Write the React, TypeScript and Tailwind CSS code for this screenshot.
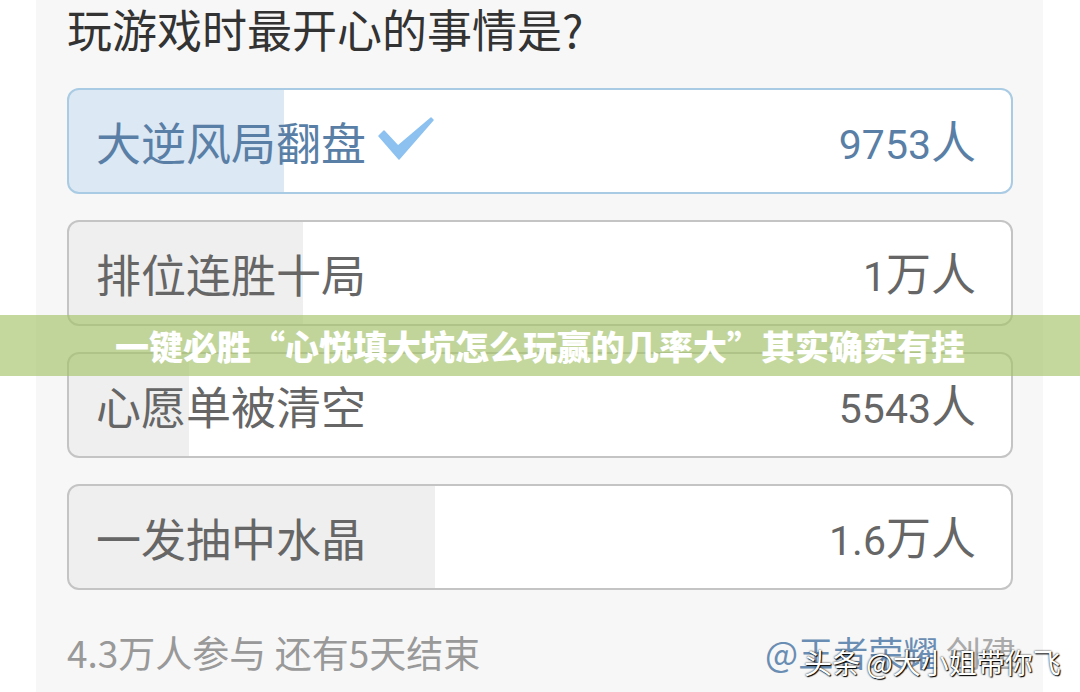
const font = "font-['Noto_Sans_CJK_SC','Roboto',sans-serif]"

interface OptionProps {
  label: string
  num: string
  unit: string
  fill: number
  selected?: boolean
}

function Option({ label, num, unit, fill, selected }: OptionProps) {
  const fillColor = selected ? '#dce8f4' : '#efefef'
  return (
    <div
      className={`flex h-[106px] items-center justify-between rounded-[12px] border-2 pl-[27px] pr-[35px] ${
        selected ? 'border-[#a9cbe3] text-[#5a7fa6]' : 'border-[#c4c4c4] text-[#666666]'
      }`}
      style={{ background: `linear-gradient(to right, ${fillColor} ${fill}px, #ffffff ${fill}px)` }}
    >
      <div className="flex items-center">
        <span className="text-[45px] leading-none">{label}</span>
        {selected && (
          <svg width="56" height="44" viewBox="0 0 56 44" className="ml-[12px] mt-[-4px]">
            <path d="M1 19 L6 14 L20 29 L53 1 L55 3 L21 42 Z" fill="#8cc1f0" stroke="#8cc1f0" strokeWidth="1.5" strokeLinejoin="round" />
          </svg>
        )}
      </div>
      <span className="text-[45px] leading-none">
        <span className="font-['Roboto',sans-serif] text-[41px]">{num}</span>
        {unit}
      </span>
    </div>
  )
}

export default function App() {
  return (
    <div className={`relative h-[692px] w-[1080px] overflow-hidden bg-white ${font}`}>
      <div className="ml-[36px] flex h-full w-[1007px] flex-col bg-[#f7f7f7] pl-[31px] pr-[30px]">
        <h1 className="mt-[2px] text-[45px] leading-[54px] text-[#333333]">玩游戏时最开心的事情是?</h1>
        <div className="mt-[32px] flex flex-col gap-[26px]">
          <Option label="大逆风局翻盘" num="9753" unit="人" fill={215} selected />
          <Option label="排位连胜十局" num="1" unit="万人" fill={234} />
          <Option label="心愿单被清空" num="5543" unit="人" fill={120} />
          <Option label="一发抽中水晶" num="1.6" unit="万人" fill={366} />
        </div>
        <div className="mt-[40px] flex items-center justify-between leading-[44px]">
          <span className="text-[37px] text-[#999999]">4.3万人参与 还有5天结束</span>
          <span className="mr-[-3px] text-[35px]">
            <span className="text-[#6a8db3]">@王者荣耀</span>
            <span className="text-[#aaaaaa]"> 创建</span>
          </span>
        </div>
      </div>

      <div className="absolute left-0 top-[315px] flex h-[61px] w-full items-center justify-center bg-[rgba(165,195,105,0.65)]">
        <span className="text-[34px] font-black leading-none text-white">一键必胜“心悦填大坑怎么玩赢的几率大”其实确实有挂</span>
      </div>

      <div className="absolute left-[804px] top-[648px] text-[28px] leading-none text-white [text-shadow:0_0_2px_#000,1px_1px_1px_#000]">
        头条 @大小姐带你飞
      </div>
    </div>
  )
}
